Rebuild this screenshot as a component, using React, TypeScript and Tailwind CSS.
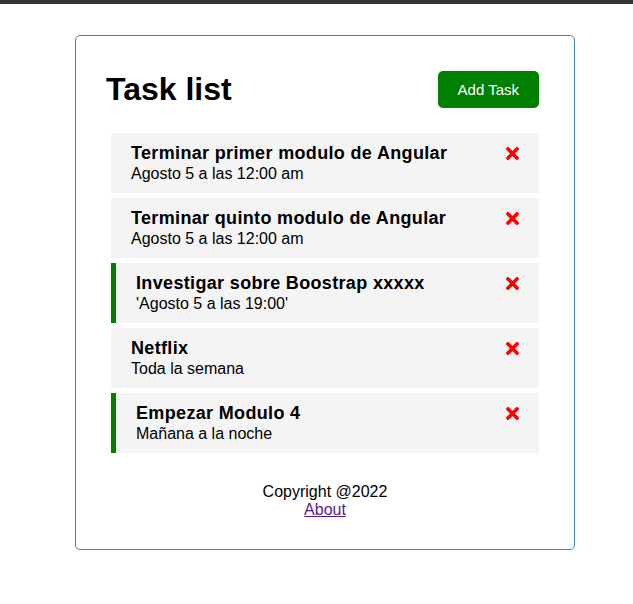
import { FaTimes } from "react-icons/fa";

type Task = {
  id: number;
  text: string;
  day: string;
  reminder: boolean;
};

const tasks: Task[] = [
  { id: 1, text: "Terminar primer modulo de Angular", day: "Agosto 5 a las 12:00 am", reminder: false },
  { id: 2, text: "Terminar quinto modulo de Angular", day: "Agosto 5 a las 12:00 am", reminder: false },
  { id: 3, text: "Investigar sobre Boostrap xxxxx", day: "'Agosto 5 a las 19:00'", reminder: true },
  { id: 4, text: "Netflix", day: "Toda la semana", reminder: false },
  { id: 5, text: "Empezar Modulo 4", day: "Mañana a la noche", reminder: true },
];

function TaskItem({ task }: { task: Task }) {
  return (
    <div
      className={
        "bg-[#f4f4f4] py-[10px] px-[20px] cursor-pointer " +
        (task.reminder ? "border-l-[5px] border-[#008000]" : "")
      }
    >
      <h3 className="flex items-center justify-between text-[18px] leading-[21px] font-bold">
        <span className="tracking-[0.34px]">{task.text}</span>
        <FaTimes className="text-[#ff0000] mr-[-3px] mt-[-1px] text-[19px]" />
      </h3>
      <p className="text-[16px] leading-[19px]">{task.day}</p>
    </div>
  );
}

export default function App() {
  return (
    <div className="min-h-screen bg-white text-black font-['Liberation_Sans',Arial,sans-serif]">
      <div className="h-[4px] bg-[#363636]" />

      <div className="w-[500px] ml-[75px] mt-[31px] border border-[#4682b4] rounded-[5px] p-[30px]">
        {/* Header */}
        <header className="flex items-center justify-between mb-[20px]">
          <h1 className="text-[32px] leading-[37px] font-bold">Task list</h1>
          <button className="m-[5px] bg-[#008000] text-white rounded-[5px] px-[20px] py-[10px] text-[15px] leading-[17px]">
            Add Task
          </button>
        </header>

        {/* Tasks */}
        <div className="flex flex-col gap-[5px] px-[5px]">
          {tasks.map((t) => (
            <TaskItem key={t.id} task={t} />
          ))}
        </div>

        {/* Footer */}
        <footer className="mt-[30px] text-center text-[16px] leading-[18px]">
          <p>Copyright @2022</p>
          <a href="#" className="text-[#551a8b] underline">
            About
          </a>
        </footer>
      </div>
    </div>
  );
}
